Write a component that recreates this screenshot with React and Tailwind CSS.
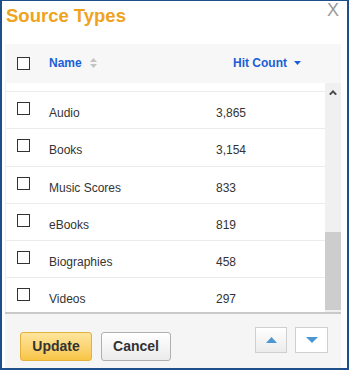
import React from 'react';

const rows = [
  { name: 'Audio', count: '3,865' },
  { name: 'Books', count: '3,154' },
  { name: 'Music Scores', count: '833' },
  { name: 'eBooks', count: '819' },
  { name: 'Biographies', count: '458' },
  { name: 'Videos', count: '297' },
];

const Box = () => <span className="block w-[13px] h-[13px] border border-[#333] bg-white"></span>;

const App = () => {
  return (
    <div className="w-[349px] h-[370px] border-2 border-t border-[#1f4f8b] bg-white pl-[3px] pr-[6px] flex flex-col font-['Liberation_Sans',Arial,sans-serif]">
      <header className="relative h-[43px] shrink-0 pt-[6px] pl-[1px]">
        <h1 className="text-[18.5px] leading-none font-bold text-[#efa31d]">Source Types</h1>
        <button className="absolute top-0 right-[2px] text-[18px] leading-none text-[#9a9a9a]">X</button>
      </header>

      <div className="h-[39px] shrink-0 bg-[#f7f7f7] flex items-center pb-[2px] text-[12px] font-bold text-[#1a5fd6]">
        <div className="w-[44px] pl-[12px] pt-[2px]"><Box /></div>
        <div className="w-[184px] flex items-center">
          <span>Name</span>
          <svg className="ml-[8px]" width="7" height="10" viewBox="0 0 7 10">
            <path d="M3.5 0 L7 4 L0 4 Z M0 6 L7 6 L3.5 10 Z" fill="#c4c4c4" />
          </svg>
        </div>
        <div className="flex items-center">
          <span>Hit Count</span>
          <svg className="ml-[7px] mt-[1px]" width="7" height="4" viewBox="0 0 7 4">
            <path d="M0 0 L7 0 L3.5 4 Z" fill="#1a5fd6" />
          </svg>
        </div>
      </div>

      <div className="h-[229px] shrink-0 flex">
        <div className="flex-1 overflow-hidden border-l border-[#efefef] text-[12px] text-[#333]">
          <div className="h-[9px] border-b border-[#ebebeb]"></div>
          {rows.map((r) => (
            <div key={r.name} className="h-[37.3px] border-b border-[#ebebeb] flex">
              <div className="w-[43px] pl-[11px] pt-[10px]"><Box /></div>
              <div className="w-[167px] pt-[12px]">{r.name}</div>
              <div className="pt-[12px]">{r.count}</div>
            </div>
          ))}
        </div>
        <div className="w-[16px] bg-[#f0f0f0] flex flex-col items-center justify-between">
          <svg className="mt-[7px]" width="8" height="5" viewBox="0 0 8 5">
            <path d="M0.8 4.6 L4 1.4 L7.2 4.6" fill="none" stroke="#4a4a4a" strokeWidth="2" />
          </svg>
          <div className="w-[16px] h-[78px] bg-[#cdcdcd] mb-[2px]"></div>
        </div>
      </div>

      <div className="h-[2px] shrink-0 bg-[#c9c9c9]"></div>

      <footer className="flex-1 bg-[#f5f5f5] flex justify-between pl-[15px] pr-[13px]">
        <div className="flex gap-[9px] mt-[18px]">
          <button className="w-[72px] h-[29px] rounded-[3px] border border-[#e2b23c] bg-linear-to-b from-[#fee59c] to-[#f8c544] text-[14px] font-bold text-[#333]">Update</button>
          <button className="w-[70px] h-[29px] rounded-[3px] border border-[#b0b0b0] bg-linear-to-b from-white to-[#ebebeb] text-[14px] font-bold text-[#333]">Cancel</button>
        </div>
        <div className="flex gap-[8px] mt-[13px]">
          <button className="w-[32px] h-[26px] border border-[#cfcfcf] bg-linear-to-b from-white to-[#ebebeb] flex items-center justify-center">
            <svg width="11" height="6" viewBox="0 0 11 6"><path d="M5.5 0 L11 6 L0 6 Z" fill="#4b97d3" /></svg>
          </button>
          <button className="w-[33px] h-[26px] border border-[#cfcfcf] bg-white flex items-center justify-center">
            <svg width="12" height="6" viewBox="0 0 12 6"><path d="M0 0 L12 0 L6 6 Z" fill="#4b97d3" /></svg>
          </button>
        </div>
      </footer>
    </div>
  );
};

export default App;
